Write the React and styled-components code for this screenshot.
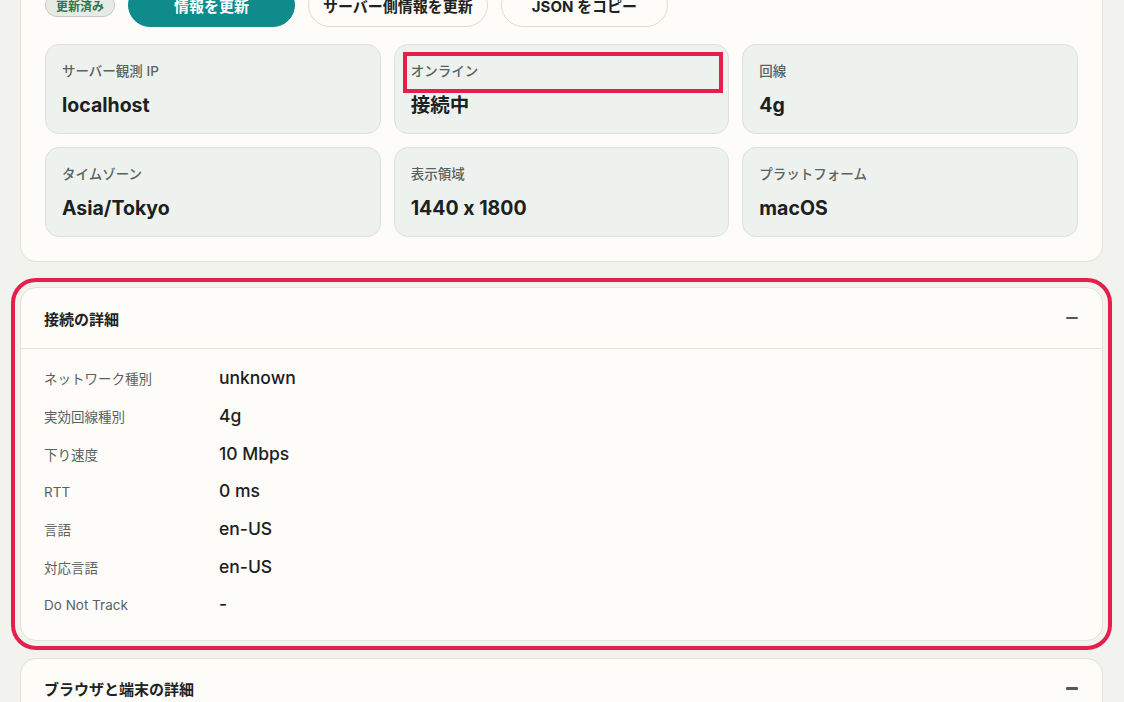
import React from "react";
import styled, { createGlobalStyle } from "styled-components";

const Global = createGlobalStyle`
  html, body { margin: 0; padding: 0; }
  body {
    background: #f2f2ee;
    font-family: Inter, "Noto Sans CJK JP", sans-serif;
    font-feature-settings: "calt" 0;
    color: #1d2321;
    overflow: hidden;
  }
`;

const Page = styled.div`
  padding: 0 21px 0 20px;
  display: flex;
  flex-direction: column;
`;

const Card = styled.section`
  background: #fdfcf8;
  border: 1px solid #e2e1da;
  border-radius: 16px;
  box-sizing: border-box;
  margin-top: ${(p) => p.$mt || 0}px;
  ${(p) =>
    p.$highlight &&
    `outline: 4px solid #e31f4b; outline-offset: 5px;`}
`;

const TopCard = styled(Card)`
  padding: 24px 24px 24px;
  margin-top: -42px;
`;

const ButtonRow = styled.div`
  display: flex;
  align-items: center;
  gap: 13px;
  margin-bottom: 17px;
`;

const Badge = styled.span`
  display: inline-flex;
  align-items: center;
  height: 24px;
  padding: 0 10px;
  border-radius: 999px;
  background: #e7ebe6;
  border: 1px solid #c8ccc5;
  color: #2d7749;
  font-size: 12px;
  font-weight: 700;
  box-sizing: border-box;
`;

const Button = styled.button`
  height: 44px;
  min-width: 167px;
  padding: 0 14px;
  border-radius: 999px;
  font-family: inherit;
  font-feature-settings: "calt" 0;
  font-size: 15px;
  font-weight: 700;
  box-sizing: border-box;
  cursor: pointer;
  background: ${(p) => (p.$primary ? "#0f8b8b" : "#fdfcf8")};
  color: ${(p) => (p.$primary ? "#ffffff" : "#1d2321")};
  border: 1px solid ${(p) => (p.$primary ? "#0f8b8b" : "#dcdcd5")};
`;

const Grid = styled.div`
  display: grid;
  grid-template-columns: repeat(3, 1fr);
  gap: 13px;
`;

const Tile = styled.div`
  position: relative;
  height: 90px;
  box-sizing: border-box;
  padding: 17px 16px 0 16px;
  background: #eef2ef;
  border: 1px solid #dde0db;
  border-radius: 14px;
  display: flex;
  flex-direction: column;
  gap: 12px;
`;

const TileLabel = styled.div`
  font-size: 13.5px;
  line-height: 18px;
  font-weight: 500;
  color: #59625f;
`;

const TileValue = styled.div`
  font-size: 19.5px;
  line-height: 26px;
  font-weight: 700;
  color: #1b211f;
`;

const Marker = styled.div`
  position: absolute;
  top: 7px;
  left: 8px;
  width: 320px;
  height: 41px;
  border: 4px solid #e31f4b;
  box-sizing: border-box;
  pointer-events: none;
`;

const Header = styled.div`
  height: 60px;
  padding: 0 24px 0 23px;
  display: flex;
  align-items: center;
  justify-content: space-between;
  border-bottom: ${(p) => (p.$open ? "1px solid #e4e3dc" : "none")};
`;

const Title = styled.h2`
  margin: 0;
  font-size: 15px;
  font-weight: 700;
  color: #1d2321;
`;

const Minus = styled.span`
  display: block;
  width: 12px;
  height: 2.5px;
  background: #4f5957;
  border-radius: 1px;
`;

const Body = styled.div`
  padding: 10px 24px 17px 23px;
  display: flex;
  flex-direction: column;
`;

const Row = styled.div`
  display: grid;
  grid-template-columns: 175px 1fr;
  align-items: baseline;
  height: 37.67px;
  align-content: center;
`;

const RowLabel = styled.div`
  font-size: 13.5px;
  color: #5a625f;
`;

const RowValue = styled.div`
  font-size: 17.5px;
  font-weight: 500;
  color: #1b211f;
`;

const tiles = [
  ["サーバー観測 IP", "localhost"],
  ["オンライン", "接続中", true],
  ["回線", "4g"],
  ["タイムゾーン", "Asia/Tokyo"],
  ["表示領域", "1440 x 1800"],
  ["プラットフォーム", "macOS"],
];

const rows = [
  ["ネットワーク種別", "unknown"],
  ["実効回線種別", "4g"],
  ["下り速度", "10 Mbps"],
  ["RTT", "0 ms"],
  ["言語", "en-US"],
  ["対応言語", "en-US"],
  ["Do Not Track", "-"],
];

export default function App() {
  return (
    <>
      <Global />
      <Page>
        <TopCard>
          <ButtonRow>
            <Badge>更新済み</Badge>
            <Button $primary>情報を更新</Button>
            <Button>サーバー側情報を更新</Button>
            <Button>JSON をコピー</Button>
          </ButtonRow>
          <Grid>
            {tiles.map(([l, v, mark]) => (
              <Tile key={l}>
                <TileLabel>{l}</TileLabel>
                <TileValue>{v}</TileValue>
                {mark && <Marker />}
              </Tile>
            ))}
          </Grid>
        </TopCard>

        <Card $highlight $mt={25}>
          <Header $open>
            <Title>接続の詳細</Title>
            <Minus />
          </Header>
          <Body>
            {rows.map(([l, v]) => (
              <Row key={l}>
                <RowLabel>{l}</RowLabel>
                <RowValue>{v}</RowValue>
              </Row>
            ))}
          </Body>
        </Card>

        <Card $mt={17}>
          <Header>
            <Title>ブラウザと端末の詳細</Title>
            <Minus />
          </Header>
        </Card>
      </Page>
    </>
  );
}
